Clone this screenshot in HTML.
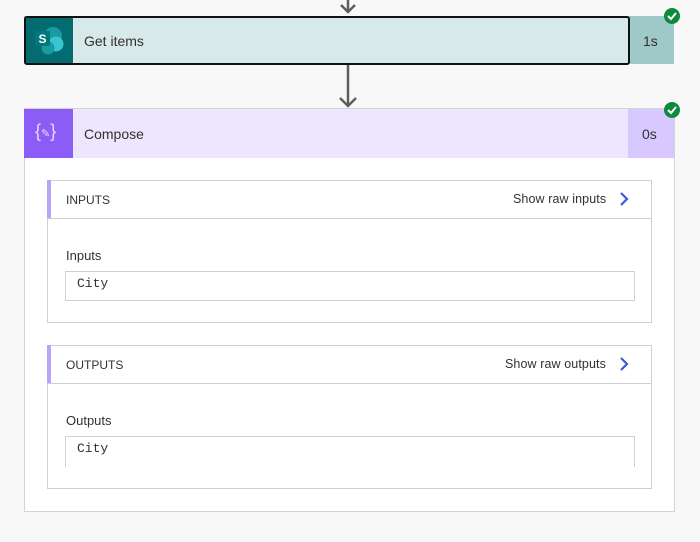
<!DOCTYPE html>
<html><head><style>
body{margin:0;width:700px;height:542px;background:#f8f8f8;position:relative;overflow:hidden;font-family:"Liberation Sans",sans-serif;color:#323130}
.a{position:absolute}
.lbl{font-size:12px;color:#323130}
.mono{font-family:"Liberation Mono",monospace;font-size:13px}
</style></head><body>
<svg class="a" style="left:0;top:0" width="700" height="120">
<g stroke="#605e5c" stroke-width="2.5" fill="none">
<line x1="348" y1="0" x2="348" y2="12"/><polyline points="341,5 348,12 355,5"/>
<line x1="348" y1="64" x2="348" y2="106"/><polyline points="340,98 348,106 356,98"/>
</g></svg>
<div class="a" style="left:24px;top:16px;width:650px;height:48px;background:#9fc8c8"></div>
<div class="a" style="left:24px;top:16px;width:602px;height:45px;background:#d8e9e9;border:2px solid #111;border-radius:3px;overflow:hidden">
<div class="a" style="left:0;top:0;width:47px;height:45px;background:#036c70"></div>
<svg class="a" style="left:7px;top:7px" width="34" height="32"><circle cx="20" cy="11" r="9" fill="#1a9ba1"/><circle cx="23" cy="19" r="7.5" fill="#37c6d0"/><circle cx="15" cy="23" r="6.5" fill="#1a9ba1"/><rect x="2" y="6" width="15" height="15" rx="2" fill="#03787c"/><text x="5.5" y="18" font-size="12" font-weight="bold" fill="#fff" font-family="Liberation Sans">S</text></svg>
<div class="a" style="left:58px;top:15px;font-size:14px">Get items</div>
</div>
<div class="a" style="left:643px;top:33px;font-size:14px">1s</div>
<svg class="a" style="left:663px;top:7px" width="18" height="18"><circle cx="9" cy="9" r="8" fill="#0e8a3d"/><polyline points="5,9 8,12 13,6" stroke="#fff" stroke-width="2" fill="none"/></svg>
<div class="a" style="left:24px;top:108px;width:649px;height:402px;background:#fff;border:1px solid #d4d4d4"></div>
<div class="a" style="left:24px;top:109px;width:650px;height:49px;background:#ede6ff"></div>
<div class="a" style="left:24px;top:109px;width:49px;height:49px;background:#8c5cf6"></div>
<div class="a" style="left:35px;top:121px;font-size:18px;color:#e8dcff">{<span style="font-size:11px">✎</span>}</div>
<div class="a" style="left:84px;top:126px;font-size:14px">Compose</div>
<div class="a" style="left:628px;top:109px;width:46px;height:49px;background:#d7c9ff"></div>
<div class="a" style="left:642px;top:126px;font-size:14px">0s</div>
<svg class="a" style="left:663px;top:101px" width="18" height="18"><circle cx="9" cy="9" r="8" fill="#0e8a3d"/><polyline points="5,9 8,12 13,6" stroke="#fff" stroke-width="2" fill="none"/></svg>
<div class="a" style="left:47px;top:180px;width:603px;height:141px;border:1px solid #d0d0d0;background:#fff"></div>
<div class="a" style="left:47px;top:180px;width:604px;height:38px;border-bottom:1px solid #d0d0d0"></div>
<div class="a" style="left:47px;top:180px;width:4px;height:38px;background:#b9a4f5"></div>
<div class="a lbl" style="left:66px;top:193px">INPUTS</div>
<div class="a lbl" style="left:513px;top:192px;font-size:12.5px;letter-spacing:0.1px">Show raw inputs</div>
<svg class="a" style="left:618px;top:191px" width="12" height="16"><polyline points="3,2 9,8 3,14" stroke="#3b5bdb" stroke-width="2.2" fill="none"/></svg>
<div class="a" style="left:66px;top:248px;font-size:13px">Inputs</div>
<div class="a" style="left:65px;top:271px;width:568px;height:28px;border:1px solid #d0d0d0"></div>
<div class="a mono" style="left:77px;top:276px">City</div>
<div class="a" style="left:47px;top:345px;width:603px;height:142px;border:1px solid #d0d0d0;background:#fff"></div>
<div class="a" style="left:47px;top:345px;width:604px;height:38px;border-bottom:1px solid #d0d0d0"></div>
<div class="a" style="left:47px;top:345px;width:4px;height:38px;background:#b9a4f5"></div>
<div class="a lbl" style="left:66px;top:358px">OUTPUTS</div>
<div class="a lbl" style="left:505px;top:357px;font-size:12.5px;letter-spacing:0.1px">Show raw outputs</div>
<svg class="a" style="left:618px;top:356px" width="12" height="16"><polyline points="3,2 9,8 3,14" stroke="#3b5bdb" stroke-width="2.2" fill="none"/></svg>
<div class="a" style="left:66px;top:413px;font-size:13px">Outputs</div>
<div class="a" style="left:65px;top:436px;width:568px;height:30px;border:1px solid #d0d0d0;border-bottom:none"></div>
<div class="a mono" style="left:77px;top:441px">City</div>
</body></html>
